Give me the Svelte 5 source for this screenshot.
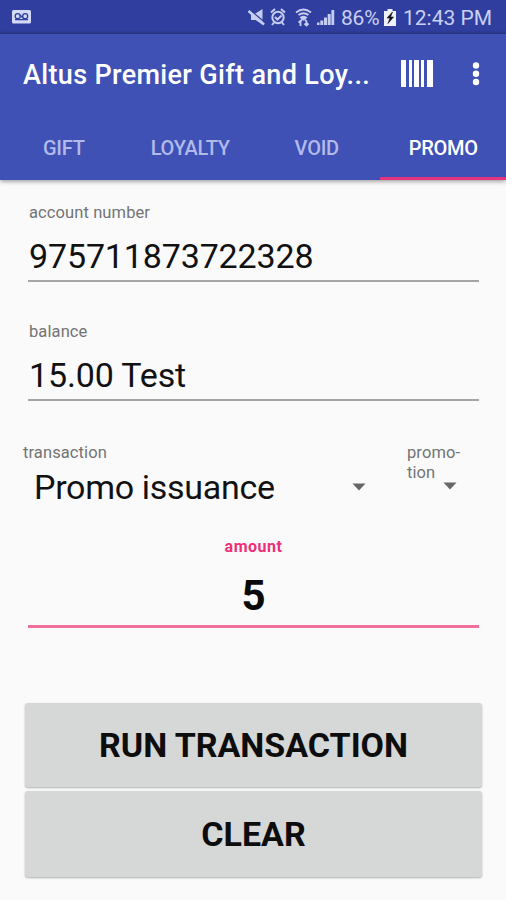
<script lang="ts">
  const tabs = ['GIFT', 'LOYALTY', 'VOID', 'PROMO']
  const bars = [
    { x: 0, w: 5 },
    { x: 8, w: 3 },
    { x: 13, w: 5 },
    { x: 20, w: 3 },
    { x: 26, w: 6 },
  ]

  let activeTab = $state('PROMO')
  let account = $state('975711873722328')
  let balance = $state('15.00 Test')
  let amount = $state('5')

  function clear() {
    account = ''
    balance = ''
    amount = ''
  }
</script>

<div class="screen">
  <div class="status-bar">
    <svg class="voicemail" width="19" height="14" viewBox="0 0 19 14">
      <rect width="19" height="13.5" rx="1.5" fill="#d3daf7" />
      <g fill="none" stroke="#303f9f" stroke-width="1.3">
        <circle cx="5.7" cy="6.2" r="2.5" />
        <circle cx="13.2" cy="6.2" r="2.5" />
        <path d="M3 9.6h13M8 5l3 3" />
      </g>
    </svg>
    <svg class="icons" width="90" height="22" viewBox="0 0 90 22">
      <path d="M3 6.500h4.500L14.500 2v15.500L7.500 13H3z" fill="#c5cdf2" />
      <path d="M1 2.500l16 13" stroke="#303f9f" stroke-width="1.500" />
      <path d="M0.500 4l15.500 13.500" stroke="#c5cdf2" stroke-width="2.600" />
      <g fill="none" stroke="#c5cdf2" stroke-width="2">
        <circle cx="30" cy="10.500" r="5.700" />
        <path d="M23 5.500l4-3.500M37 5.500l-4-3.500M26 15.500l-2 2.500M34 15.500l2 2.500M27 10l2.500 2.500 4-4" />
      </g>
      <g fill="none" stroke="#c5cdf2" stroke-width="1.800">
        <path d="M48 5.500q7.500-6 15 0M50.500 8q5-3.500 10 0" />
        <path d="M53 10.500q2.500-1.800 5 0l-2.500 2z" fill="#c5cdf2" />
        <path d="M54 12.500l-1.500 1.500v5M50.500 15.500l2-1.500M57 12.500l1.500 2v4.500M56.500 16.500l2 2 2-2" />
      </g>
      <path
        d="M69 18v-2.500h2.500v2.500zM72.300 18v-4.500h3v4.500zM76 18v-7.500h3v7.500zM79.700 18V7h3v11zM83.400 18V3h2.800v15z"
        fill="#c5cdf2"
      />
    </svg>
    <span class="percent">86%</span>
    <svg class="battery" width="12" height="17" viewBox="0 0 12 17">
      <path d="M0 2h3.500V0h5v2H12v15H0z" fill="#eef0fb" />
      <path d="M8.500 3L3 9h3l-2 5.500L9.500 8h-3z" fill="#111" stroke="#111" stroke-width="0.600" />
    </svg>
    <span class="time">12:43 PM</span>
  </div>

  <header>
    <div class="toolbar">
      <h1>Altus Premier Gift and Loy...</h1>
      <svg class="barcode" width="32" height="27" viewBox="0 0 32 27">
        {#each bars as bar}
          <rect x={bar.x} y="0" width={bar.w} height="27" fill="#fff" />
        {/each}
      </svg>
      <svg class="overflow" width="8" height="26" viewBox="0 0 8 26" fill="#fff">
        <circle cx="4" cy="4.500" r="3.200" />
        <circle cx="4" cy="12.800" r="3.200" />
        <circle cx="4" cy="21" r="3.200" />
      </svg>
    </div>
    <nav>
      {#each tabs as tab}
        <button class="tab" class:active={activeTab === tab} onclick={() => (activeTab = tab)}>
          {tab}
        </button>
      {/each}
    </nav>
  </header>

  <main>
    <div class="field">
      <span class="label">account number</span>
      <div class="value account">{account}</div>
    </div>
    <div class="field">
      <span class="label">balance</span>
      <div class="value balance">{balance}</div>
    </div>

    <div class="spinners">
      <div class="spinner">
        <span class="label">transaction</span>
        <div class="selected">
          <span>Promo issuance</span>
          <svg width="14" height="8" viewBox="0 0 14 8"><path d="M0.500 0.500h13L7 7.500z" fill="#666" /></svg>
        </div>
      </div>
      <div class="promotion">
        <span class="label">promo-<br />tion</span>
        <svg width="14" height="8" viewBox="0 0 14 8"><path d="M0.500 0.500h13L7 7.500z" fill="#666" /></svg>
      </div>
    </div>

    <div class="amount">
      <span class="amount-label">amount</span>
      <div class="amount-value">{amount}</div>
    </div>

    <div class="actions">
      <button class="action run">RUN TRANSACTION</button>
      <button class="action clear" onclick={clear}>CLEAR</button>
    </div>
  </main>
</div>

<style>
  :global(body) {
    background: #fafafa;
  }

  .screen {
    display: flex;
    flex-direction: column;
    width: 506px;
    height: 900px;
    overflow: hidden;
    background: #fafafa;
    font-family: Roboto, sans-serif;
  }

  button {
    margin: 0;
    padding: 0;
    border: none;
    font-family: inherit;
    cursor: pointer;
  }

  svg {
    display: block;
    flex: none;
  }

  .status-bar {
    display: flex;
    align-items: center;
    box-sizing: border-box;
    height: 34px;
    padding-left: 12px;
    background: linear-gradient(#303f9f 31px, #2c3a90);
    color: #c9d0f3;
    font-size: 21px;
    white-space: nowrap;
  }

  .icons {
    margin: 2px 3px 0 217px;
  }

  .percent {
    width: 43px;
    margin-top: 2px;
    letter-spacing: -0.2px;
  }

  .battery {
    margin: 1px 7px 0 0;
  }

  .time {
    margin-top: 2px;
  }

  header {
    position: relative;
    height: 146px;
    background: #3f51b5;
    box-shadow: 0 1px 5px rgba(0, 0, 0, 0.45);
  }

  .toolbar {
    display: flex;
    align-items: center;
    height: 80px;
    padding-left: 23px;
  }

  h1 {
    width: 378px;
    margin: 2px 0 0;
    color: #fff;
    font-size: 27px;
    font-weight: 500;
    line-height: 32px;
    letter-spacing: 0.34px;
    white-space: nowrap;
  }

  .barcode {
    margin-top: -1px;
  }

  .overflow {
    margin-left: 39px;
  }

  nav {
    display: grid;
    grid-template-columns: repeat(4, 1fr);
    height: 66px;
  }

  .tab {
    padding: 4px 0 0 1px;
    background: transparent;
    border-bottom: 3px solid transparent;
    color: #b2baea;
    font-size: 20px;
    font-weight: 500;
    letter-spacing: -0.25px;
  }

  .tab.active {
    color: #fff;
    border-bottom-color: #e5347f;
  }

  main {
    display: flex;
    flex-direction: column;
  }

  .field {
    height: 102px;
    margin: 0 27px 17px 28px;
    box-sizing: border-box;
    padding: 23px 0 0 1px;
    border-bottom: 2px solid #a5a5a5;
  }

  .label {
    display: block;
    color: #737373;
    font-size: 16.5px;
    line-height: 20px;
    letter-spacing: 0.1px;
  }

  .value {
    margin-top: 13px;
    color: #111;
    font-size: 34px;
    line-height: 40px;
    letter-spacing: -0.15px;
    white-space: nowrap;
  }

  .spinners {
    display: flex;
    height: 86px;
    padding: 25px 0 0 23px;
    box-sizing: border-box;
  }

  .spinner {
    width: 384px;
  }

  .selected {
    display: flex;
    align-items: center;
    gap: 79px;
    height: 47px;
    padding-left: 11px;
    color: #111;
    font-size: 34px;
    letter-spacing: -0.3px;
    white-space: nowrap;
  }

  .selected span {
    width: 239px;
  }

  .promotion svg {
    margin: -1px 0 0 36px;
  }

  .amount {
    height: 91px;
    margin: 33px 27px 0 28px;
    box-sizing: border-box;
    border-bottom: 3px solid #f0709a;
    text-align: center;
  }

  .amount-label {
    display: block;
    color: #ec2f78;
    font-size: 16px;
    font-weight: 700;
    line-height: 20px;
    letter-spacing: 0.5px;
  }

  .amount-value {
    margin-top: 15px;
    color: #0a0a0a;
    font-size: 42px;
    font-weight: 700;
    line-height: 48px;
  }

  .actions {
    display: flex;
    flex-direction: column;
    gap: 4px;
    margin: 75px 24px 0 25px;
  }

  .action {
    height: 84px;
    background: #d6d7d7;
    border-radius: 3px;
    box-shadow: 0 1px 2px rgba(0, 0, 0, 0.3);
    color: #0d0d0d;
    font-size: 34px;
    font-weight: 700;
  }

  .action.clear {
    height: 86px;
  }
</style>
